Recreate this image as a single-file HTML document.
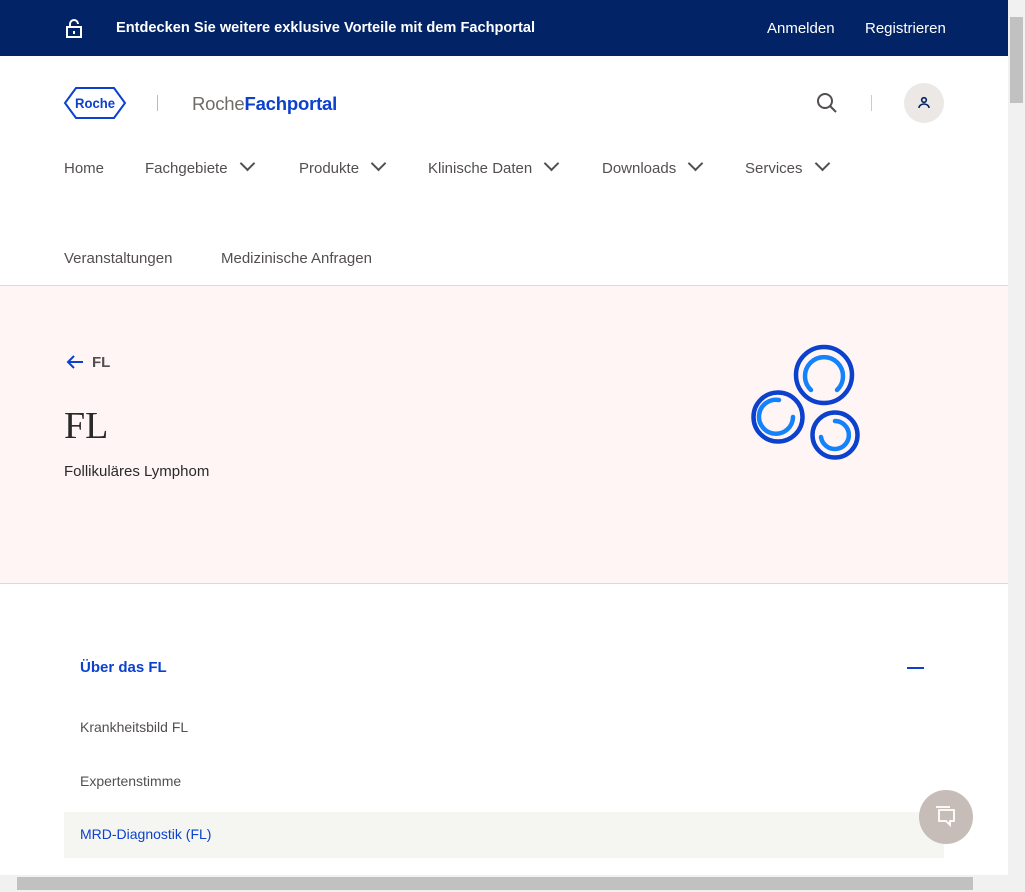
<!DOCTYPE html>
<html><head><meta charset="utf-8"><style>
*{margin:0;padding:0;box-sizing:border-box}
body{width:1025px;height:892px;overflow:hidden;font-family:"Liberation Sans",sans-serif;background:#fff;position:relative;color:#544f4f}
.top{position:absolute;left:0;top:0;width:1008px;height:56px;background:#022366;color:#fff}
.top .msg{position:absolute;left:116px;top:20px;font-size:14.6px;font-weight:bold}
.top .r{position:absolute;top:20px;font-size:15px}
.nav a{position:absolute;font-size:15px;color:#544f4f;top:160px}
.chev{display:inline-block;width:11px;height:11px;border-right:2px solid #544f4f;border-bottom:2px solid #544f4f;transform:rotate(45deg);margin-left:14px;position:relative;top:-4px}
.hero{position:absolute;left:0;top:285px;width:1008px;height:299px;background:#fff5f4;border-top:1px solid #e8d6d4;border-bottom:1px solid #e8d6d4}
.acc{position:absolute;left:80px;font-size:14px;color:#544f4f}
</style></head><body>
<div class="top">
<svg style="position:absolute;left:65px;top:19px" width="18" height="19" viewBox="0 0 18 19" fill="none" stroke="#fff" stroke-width="2"><rect x="2" y="8" width="14" height="10"/><path d="M5 8V5a4 4 0 0 1 8 0"/><path d="M9 12v3"/></svg>
<div class="msg">Entdecken Sie weitere exklusive Vorteile mit dem Fachportal</div>
<div class="r" style="left:767px">Anmelden</div>
<div class="r" style="left:865px">Registrieren</div>
</div>
<svg style="position:absolute;left:63px;top:87px" width="64" height="32" viewBox="0 0 64 32"><path d="M13 1H51L62 16L51 31H13L2 16Z" fill="none" stroke="#0b41cd" stroke-width="2"/><text x="32" y="21" text-anchor="middle" font-family="Liberation Sans Narrow,Liberation Sans,sans-serif" font-size="14" font-weight="bold" fill="#0b41cd" textLength="40" lengthAdjust="spacingAndGlyphs">Roche</text></svg>
<div style="position:absolute;left:157px;top:95px;width:1px;height:16px;background:#bbb"></div>
<div style="position:absolute;left:192px;top:93px;font-size:18.5px;color:#706b69;letter-spacing:-0.2px">Roche<b style="color:#0b41cd">Fachportal</b></div>
<svg style="position:absolute;left:816px;top:92px" width="22" height="22" viewBox="0 0 22 22" fill="none" stroke="#544f4f" stroke-width="2"><circle cx="9" cy="9" r="7"/><path d="M14 14l6 6"/></svg>
<div style="position:absolute;left:871px;top:95px;width:1px;height:16px;background:#ccc"></div>
<div style="position:absolute;left:904px;top:83px;width:40px;height:40px;border-radius:50%;background:#ebe8e5"></div>
<svg style="position:absolute;left:917px;top:96px" width="14" height="14" viewBox="0 0 14 14" fill="none" stroke="#022366" stroke-width="1.6"><circle cx="7" cy="4" r="2.3"/><path d="M2 12a5 4 0 0 1 10 0"/></svg>
<div class="nav">
<a style="left:64px">Home</a>
<a style="left:145px">Fachgebiete<span class="chev"></span></a>
<a style="left:299px">Produkte<span class="chev"></span></a>
<a style="left:428px">Klinische Daten<span class="chev"></span></a>
<a style="left:602px">Downloads<span class="chev"></span></a>
<a style="left:745px">Services<span class="chev"></span></a>
<a style="left:64px;top:250px">Veranstaltungen</a>
<a style="left:221px;top:250px">Medizinische Anfragen</a>
</div>
<div class="hero">
<svg style="position:absolute;left:66px;top:68px" width="18" height="16" viewBox="0 0 18 16" fill="none" stroke="#0b41cd" stroke-width="2"><path d="M17 8H2M8 2L2 8l6 6"/></svg>
<div style="position:absolute;left:92px;top:68px;font-size:15px;font-weight:bold;color:#544f4f">FL</div>
<div style="position:absolute;left:64px;top:118px;font-size:38px;font-family:'Liberation Serif',serif;color:#2a2a2a">FL</div>
<div style="position:absolute;left:64px;top:177px;font-size:15px;color:#2a2a2a">Follikuläres Lymphom</div>
<svg style="position:absolute;left:730px;top:45px" width="150" height="140" viewBox="730 330 150 140" fill="none" stroke-linecap="round">
<circle cx="824" cy="374" r="28" stroke="#0b41cd" stroke-width="4.5"/>
<path d="M811 389A19 19 0 1 1 837 389" stroke="#1482fa" stroke-width="4.5"/>
<circle cx="778" cy="416" r="24.5" stroke="#0b41cd" stroke-width="4.5"/>
<path d="M779 399A17 17 0 1 0 793 416" stroke="#1482fa" stroke-width="4.5"/>
<circle cx="835" cy="434" r="22.5" stroke="#0b41cd" stroke-width="4.5"/>
<path d="M835 420A14 14 0 1 1 821 436" stroke="#1482fa" stroke-width="4.5"/>
</svg>
</div>
<div style="position:absolute;left:80px;top:659px;font-size:15px;font-weight:bold;color:#0b41cd">Über das FL</div>
<div style="position:absolute;left:907px;top:667px;width:17px;height:2px;background:#0b41cd"></div>
<div class="acc" style="top:719px">Krankheitsbild FL</div>
<div class="acc" style="top:773px">Expertenstimme</div>
<div style="position:absolute;left:64px;top:812px;width:880px;height:46px;background:#f5f5f2"></div>
<div class="acc" style="top:826px;color:#0b41cd">MRD-Diagnostik (FL)</div>
<div style="position:absolute;left:919px;top:790px;width:54px;height:54px;border-radius:50%;background:#c6bcb8"></div>
<svg style="position:absolute;left:934px;top:806px" width="24" height="22" viewBox="0 0 24 22" fill="none" stroke="#fff" stroke-width="1.8"><path d="M5 4h15v11h-4v4l-4-4H5z"/><path d="M2 1h14" /></svg>
<div style="position:absolute;left:1008px;top:0;width:17px;height:875px;background:#f1f1f1"></div>
<div style="position:absolute;left:1010px;top:17px;width:13px;height:86px;background:#c1c1c1"></div>
<div style="position:absolute;left:0;top:875px;width:1025px;height:17px;background:#f1f1f1"></div>
<div style="position:absolute;left:17px;top:877px;width:956px;height:13px;background:#c1c1c1"></div>
</body></html>
